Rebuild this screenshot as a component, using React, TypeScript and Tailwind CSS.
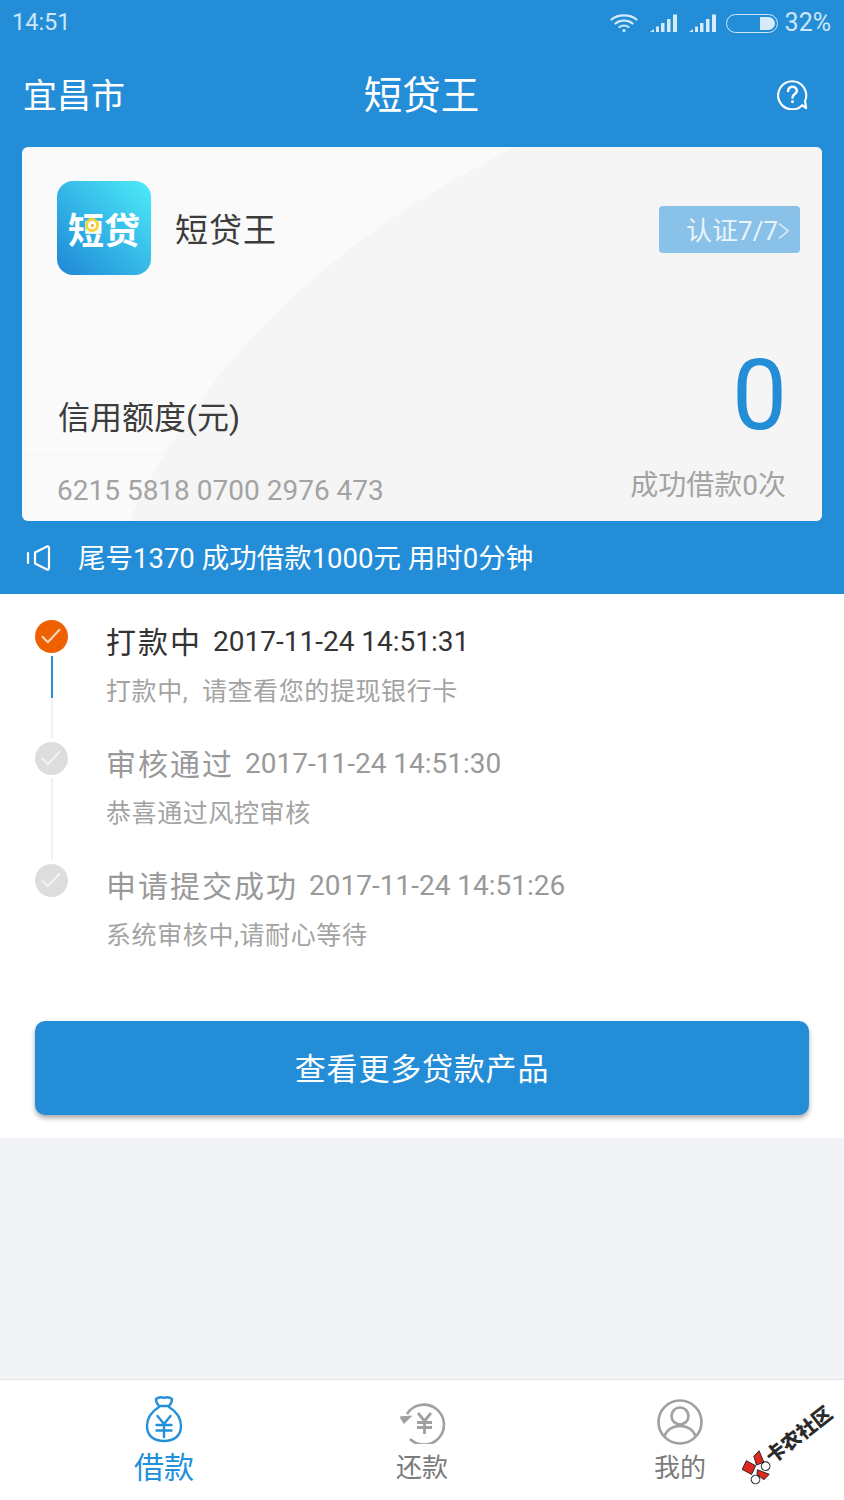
const sans = { fontFamily: '"Roboto", "Noto Sans CJK SC", sans-serif' };

function Check({ className }: { className: string }) {
  return (
    <div className={`h-[33px] w-[33px] shrink-0 rounded-full ${className}`}>
      <svg width="33" height="33" viewBox="0 0 33 33" fill="none" stroke="currentColor" strokeWidth="2" strokeLinecap="round" strokeLinejoin="round">
        <path d="M7.5 16.7 L12.8 22.2 L24.5 9.8" />
      </svg>
    </div>
  );
}

function Step({
  title,
  time,
  desc,
  active,
  line,
}: {
  title: string;
  time: string;
  desc: string;
  active?: boolean;
  line?: boolean;
}) {
  return (
    <div className="flex h-[122px] pl-[35px]">
      <div className="flex w-[33px] flex-col items-center pt-[26px]">
        {active ? (
          <Check className="bg-[#ef6100] text-[#f9d8c2]" />
        ) : (
          <Check className="bg-[#dddddd] text-[#f2f2f2]" />
        )}
        {line && (
          <div className="mt-[3px] flex w-[2px] flex-col">
            <div className={`h-[42px] ${active ? "bg-[#2490da]" : "bg-[#f0f1f6]"}`} />
            <div className="h-[40px] bg-[#f0f1f6]" />
          </div>
        )}
      </div>
      <div className="ml-[38px] pt-[28px]">
        <div className={`flex h-[40px] items-center ${active ? "text-[#333333]" : "text-[#999999]"}`}>
          <span className="text-[30px] tracking-[2px]">{title}</span>
          <span className="ml-[11px] text-[28px]">{time}</span>
        </div>
        <div className="mt-[14px] text-[25px] leading-[32px] tracking-[0.6px] text-[#a3a3a3]">{desc}</div>
      </div>
    </div>
  );
}

function TabBag() {
  return (
    <svg width="38" height="48" viewBox="0 0 38 48" fill="none" stroke="#2490da" strokeWidth="2.4" strokeLinecap="round" strokeLinejoin="round">
      <path d="M11 4 Q15 1 19 3 Q23 1 27 4 Q27 8 24 11 L14 11 Q11 8 11 4 Z" />
      <path d="M14 12 C6 17 2 24 2 31 C2 41 9 46 19 46 C29 46 36 41 36 31 C36 24 32 17 24 12" />
      <path d="M12.5 21 L19 29 L25.5 21 M11.5 30 H26.5 M11.5 35.5 H26.5 M19 29 V42" />
    </svg>
  );
}

function TabRepay() {
  return (
    <svg width="48" height="44" viewBox="0 0 48 44" fill="none" stroke="#a0a0a0" strokeLinejoin="round">
      <path strokeWidth="2.6" d="M9 14 A20 20 0 1 1 12 39" />
      <path d="M2 17 L13.5 16 L6 23.5 Z" fill="#a0a0a0" strokeWidth="1" />
      <path strokeWidth="2.8" d="M20 13 L26.5 21 L33 13 M19 22.5 H34 M19 27.5 H34 M26.5 21 V34" />
    </svg>
  );
}

function TabMine() {
  return (
    <svg width="46" height="46" viewBox="0 0 46 46" fill="none" stroke="#a0a0a0" strokeWidth="2.6">
      <circle cx="23" cy="23" r="21.5" />
      <circle cx="23" cy="17" r="8.5" />
      <path d="M7 38 C10 30 16 27 23 27 C30 27 36 30 39 38" />
    </svg>
  );
}

export default function App() {
  return (
    <div className="flex h-[1500px] w-[844px] flex-col overflow-hidden bg-[#f2f3f7]" style={sans}>
      <div className="bg-[#248dd8]">
        <div className="flex h-[46px] items-center justify-between pl-[12px] pr-[13px] text-[25px] text-[#cfe6f7]">
          <span className="text-[23.5px]">14:51</span>
          <div className="flex items-center">
            <svg width="28" height="20" viewBox="0 0 28 20" fill="none" stroke="#d6eaf9" strokeWidth="2.2" strokeLinecap="round">
              <path d="M1.5 6.5 C8 1 20 1 26.5 6.5" />
              <path d="M5.5 10.5 C10 6.5 18 6.5 22.5 10.5" />
              <path d="M9.5 14 C12 12 16 12 18.5 14" />
              <circle cx="14" cy="17.5" r="1.6" fill="#d6eaf9" stroke="none" />
            </svg>
            <svg className="ml-[12px]" width="27" height="18" viewBox="0 0 27 18" fill="#d6eaf9">
              <path d="M0 18 L4 15 V18 Z M6 18 V12.5 H9 V18 Z M11 18 V9 H14.5 V18 Z M17 18 V5 H20.5 V18 Z M23 18 V0.5 H27 V18 Z" />
            </svg>
            <svg className="ml-[12px]" width="27" height="18" viewBox="0 0 27 18" fill="#d6eaf9">
              <path d="M0 18 L4 15 V18 Z M6 18 V12.5 H9 V18 Z M11 18 V9 H14.5 V18 Z M17 18 V5 H20.5 V18 Z M23 18 V0.5 H27 V18 Z" />
            </svg>
            <div className="ml-[10px] flex h-[19px] w-[52px] items-center justify-end rounded-full border border-[#cfe6f7] pr-[2px]">
              <div className="h-[13px] w-[15px] rounded-r-full bg-[#d6eaf9]" />
            </div>
            <span className="ml-[7px]">32%</span>
          </div>
        </div>
        <div className="flex h-[101px] items-center justify-between pb-[1px] pl-[23px] pr-[36px] text-white">
          <span className="w-[200px] text-[34px]">宜昌市</span>
          <span className="ml-[12px] text-[38.5px]">短贷王</span>
          <div className="flex w-[200px] justify-end">
            <svg className="-mt-[3px]" width="31" height="31" viewBox="0 0 32 32" fill="none" stroke="white" strokeWidth="2.2" strokeLinecap="round" strokeLinejoin="round">
              <path d="M30 30 L26 27 A14.5 14.5 0 1 1 29 22.5 Z" />
              <path d="M11.5 12.5 C11.5 6.5 20.5 6.5 20.5 12.5 C20.5 15.5 16 15.5 16 19" strokeWidth="2.6" />
              <circle cx="16" cy="23.5" r="1.5" fill="white" stroke="none" />
            </svg>
          </div>
        </div>
        <div className="px-[22px]">
          <div className="relative h-[374px] overflow-hidden rounded-[6px] bg-[#fafafa]">
            <div className="absolute left-0 right-0 top-[307px] h-[1px] bg-[#f4f4f4]" />
            <svg className="absolute inset-0" width="800" height="374" viewBox="0 0 800 374">
              <path d="M494 0 Q218 135 107 374 L800 374 L800 0 Z" fill="#f5f5f5" />
            </svg>
            <div className="relative flex h-full flex-col">
              <div className="flex items-start pl-[35px] pr-[22px] pt-[34px]">
                <div className="relative h-[94px] w-[94px] rounded-[16px] bg-gradient-to-tr from-[#2186d6] to-[#4fecf8]">
                  <div
                    className="flex h-full items-center justify-center text-[36px] font-bold text-white"
                    style={{ fontFamily: '"Noto Sans CJK SC", sans-serif' }}
                  >
                    短贷
                  </div>
                  <div className="absolute left-[28px] top-[37px] flex h-[14px] w-[14px] items-center justify-center rounded-full border-[3px] border-[#f5d53a] bg-white">
                    <div className="h-[3px] w-[3px] rounded-full bg-[#f0a030]" />
                  </div>
                </div>
                <span className="ml-[24px] mt-[28px] text-[33px] leading-[44px] tracking-[1px] text-[#3c3c3c]">短贷王</span>
                <div className="ml-auto mt-[25px] flex h-[47px] w-[141px] items-center justify-end rounded-[4px] bg-[#8ac1e8] pr-[11px] text-[26px] text-[#eaf4fb]">
                  <span className="mt-[3px]">认证7/7</span>
                  <svg className="mt-[2px]" width="11" height="18" viewBox="0 0 11 18" fill="none" stroke="#dcecf8" strokeWidth="1.6">
                    <path d="M1 1.5 L10 9 L1 16.5" />
                  </svg>
                </div>
              </div>
              <div className="mt-[73px] flex items-end justify-between pl-[36px] pr-[35px]">
                <span className="pb-[4px] text-[32px] leading-[44px] text-[#3c3c3c]">信用额度(元)</span>
                <span className="text-[98px] leading-[96px] text-[#248dd8]">0</span>
              </div>
              <div className="mt-[18px] flex items-center justify-between pl-[35px] pr-[36px] text-[#a3a3a3]">
                <span className="mt-[11px] text-[28px] leading-[36px]">6215 5818 0700 2976 473</span>
                <span className="text-[28px] leading-[36px]">成功借款0次</span>
              </div>
            </div>
          </div>
        </div>
        <div className="flex h-[73px] items-center pl-[26px] text-white">
          <svg width="25" height="26" viewBox="0 0 25 26" fill="none" stroke="white" strokeWidth="2.2" strokeLinejoin="round" strokeLinecap="round">
            <path d="M9 7.5 L21 1.5 Q23 1 23 3 V23 Q23 25 21 24.5 L9 18.5 Z" />
            <path d="M2 8 V18" />
          </svg>
          <span className="ml-[27px] mt-[3px] text-[27.5px]">尾号1370 成功借款1000元 用时0分钟</span>
        </div>
      </div>

      <div className="bg-white">
        <Step active line title="打款中" time="2017-11-24 14:51:31" desc={"打款中,\u00a0\u00a0请查看您的提现银行卡"} />
        <Step line title="审核通过" time="2017-11-24 14:51:30" desc="恭喜通过风控审核" />
        <Step title="申请提交成功" time="2017-11-24 14:51:26" desc="系统审核中,请耐心等待" />
        <div className="px-[35px] pb-[23px] pt-[61px]">
          <div className="flex h-[94px] items-center justify-center rounded-[10px] bg-[#248dd8] pt-[5px] text-[31px] tracking-[0.8px] text-white shadow-[0_3px_5px_rgba(0,0,0,0.35)]">
            查看更多贷款产品
          </div>
        </div>
      </div>

      <div className="flex-1" />

      <div className="relative flex h-[121px] border-t border-[#e4e4e4] bg-white">
        <div className="absolute left-[145px] top-[15px] flex w-[38px] justify-center"><TabBag /></div>
        <span className="absolute left-[134px] top-[68px] text-[30px] leading-[40px] text-[#2490da]">借款</span>
        <div className="absolute left-[398px] top-[20px]"><TabRepay /></div>
        <span className="absolute left-[396px] top-[70px] text-[26px] leading-[36px] text-[#7b7b7b]">还款</span>
        <div className="absolute left-[657px] top-[19px]"><TabMine /></div>
        <span className="absolute left-[654px] top-[70px] text-[26px] leading-[36px] text-[#7b7b7b]">我的</span>
        <div className="absolute left-[735px] top-[49px] flex w-[110px] -rotate-[38deg] items-center">
          <svg width="28" height="28" viewBox="0 0 26 26" className="shrink-0">
            <path d="M1 5 L9 1 L13 10 L5 14 Z M17 2 L24 1 L21 12 L14 10 Z M12 14 L18 24 L11 25 L9 17 Z" fill="#e0281e" stroke="#222" strokeWidth="0.8" />
            <circle cx="20" cy="16" r="4" fill="white" stroke="#222" />
            <circle cx="5" cy="20" r="4" fill="white" stroke="#222" />
          </svg>
          <span className="whitespace-nowrap text-[19.5px] font-black leading-none text-[#2a2a2a]">卡农社区</span>
        </div>
      </div>
    </div>
  );
}
